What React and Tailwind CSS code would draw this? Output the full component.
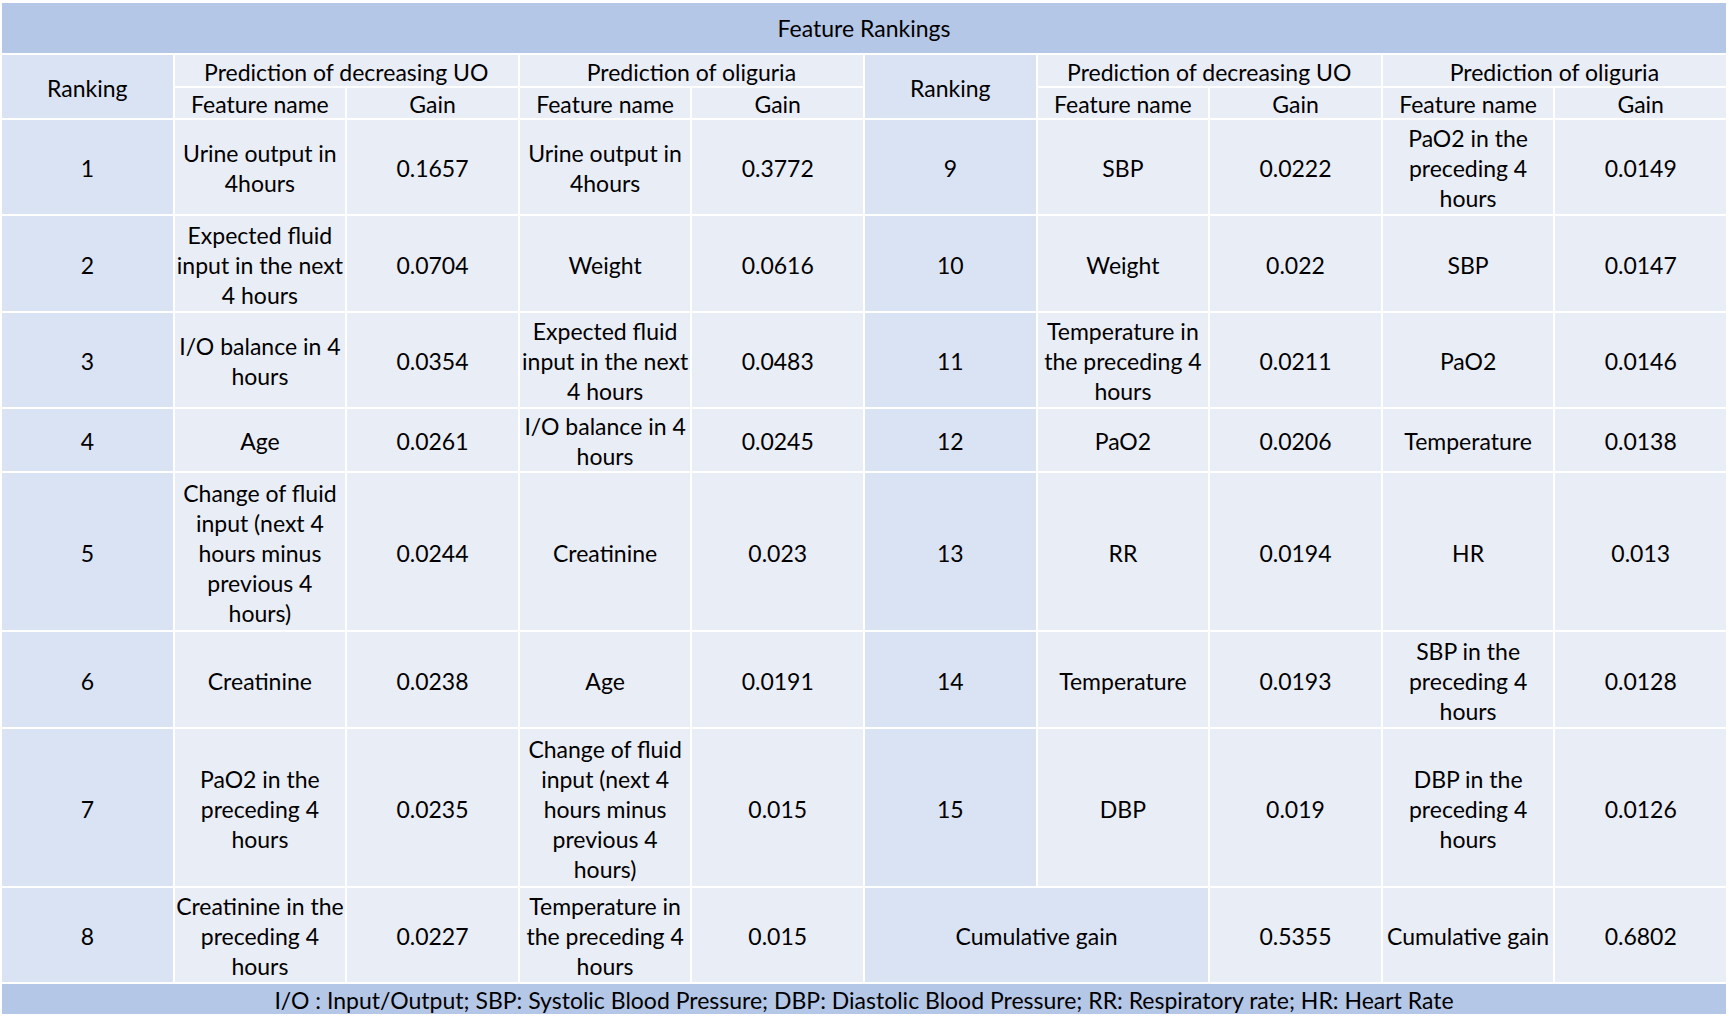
import React from "react";

const rows = [
  ["1", ["Urine output in", "4hours"], "0.1657", ["Urine output in", "4hours"], "0.3772", "9", "SBP", "0.0222", ["PaO2 in the", "preceding 4", "hours"], "0.0149"],
  ["2", ["Expected fluid", "input in the next", "4 hours"], "0.0704", "Weight", "0.0616", "10", "Weight", "0.022", "SBP", "0.0147"],
  ["3", ["I/O balance in 4", "hours"], "0.0354", ["Expected fluid", "input in the next", "4 hours"], "0.0483", "11", ["Temperature in", "the preceding 4", "hours"], "0.0211", "PaO2", "0.0146"],
  ["4", "Age", "0.0261", ["I/O balance in 4", "hours"], "0.0245", "12", "PaO2", "0.0206", "Temperature", "0.0138"],
  ["5", ["Change of fluid", "input (next 4", "hours minus", "previous 4", "hours)"], "0.0244", "Creatinine", "0.023", "13", "RR", "0.0194", "HR", "0.013"],
  ["6", "Creatinine", "0.0238", "Age", "0.0191", "14", "Temperature", "0.0193", ["SBP in the", "preceding 4", "hours"], "0.0128"],
  ["7", ["PaO2 in the", "preceding 4", "hours"], "0.0235", ["Change of fluid", "input (next 4", "hours minus", "previous 4", "hours)"], "0.015", "15", "DBP", "0.019", ["DBP in the", "preceding 4", "hours"], "0.0126"],
];

function Txt({ v }) {
  const lines = Array.isArray(v) ? v : [v];
  return (
    <div className="text-center">
      {lines.map((l, i) => (
        <div key={i} className="whitespace-nowrap">{l}</div>
      ))}
    </div>
  );
}

const light = "bg-[#e9edf5] flex items-center justify-center whitespace-nowrap pt-[2px]";
const dark = "bg-[#dae3f3] flex items-center justify-center whitespace-nowrap pt-[2px]";

export default function App() {
  return (
    <div className="w-[1729px] h-[1030px] bg-white pt-[3px] pl-[2px]">
      <div
        className="grid grid-cols-10 gap-[2px] w-[1724px] text-[23px] leading-[30px] text-black grid-rows-[50px_31px_30px_94px_95px_94px_62px_157px_95px_157px_94px_30px]"
        style={{ fontFamily: "Lato, 'Open Sans', sans-serif" }}
      >
        <div className="col-span-10 bg-[#b4c7e7] flex items-center justify-center">Feature Rankings</div>

        <div className={`${dark} row-span-2`}>Ranking</div>
        <div className={`${light} col-span-2`}>Prediction of decreasing UO</div>
        <div className={`${light} col-span-2`}>Prediction of oliguria</div>
        <div className={`${dark} row-span-2`}>Ranking</div>
        <div className={`${light} col-span-2`}>Prediction of decreasing UO</div>
        <div className={`${light} col-span-2`}>Prediction of oliguria</div>

        <div className={light}>Feature name</div>
        <div className={light}>Gain</div>
        <div className={light}>Feature name</div>
        <div className={light}>Gain</div>
        <div className={light}>Feature name</div>
        <div className={light}>Gain</div>
        <div className={light}>Feature name</div>
        <div className={light}>Gain</div>

        {rows.map((r, ri) =>
          r.map((c, ci) => (
            <div key={`${ri}-${ci}`} className={ci === 0 || ci === 5 ? dark : light}>
              <Txt v={c} />
            </div>
          ))
        )}

        <div className={dark}>8</div>
        <div className={light}><Txt v={["Creatinine in the", "preceding 4", "hours"]} /></div>
        <div className={light}>0.0227</div>
        <div className={light}><Txt v={["Temperature in", "the preceding 4", "hours"]} /></div>
        <div className={light}>0.015</div>
        <div className={`${dark} col-span-2`}>Cumulative gain</div>
        <div className={light}>0.5355</div>
        <div className={light}>Cumulative gain</div>
        <div className={light}>0.6802</div>

        <div className="col-span-10 bg-[#b4c7e7] flex items-center justify-center whitespace-nowrap pt-[2px]">
          I/O : Input/Output; SBP: Systolic Blood Pressure; DBP: Diastolic Blood Pressure; RR: Respiratory rate; HR: Heart Rate
        </div>
      </div>
    </div>
  );
}
